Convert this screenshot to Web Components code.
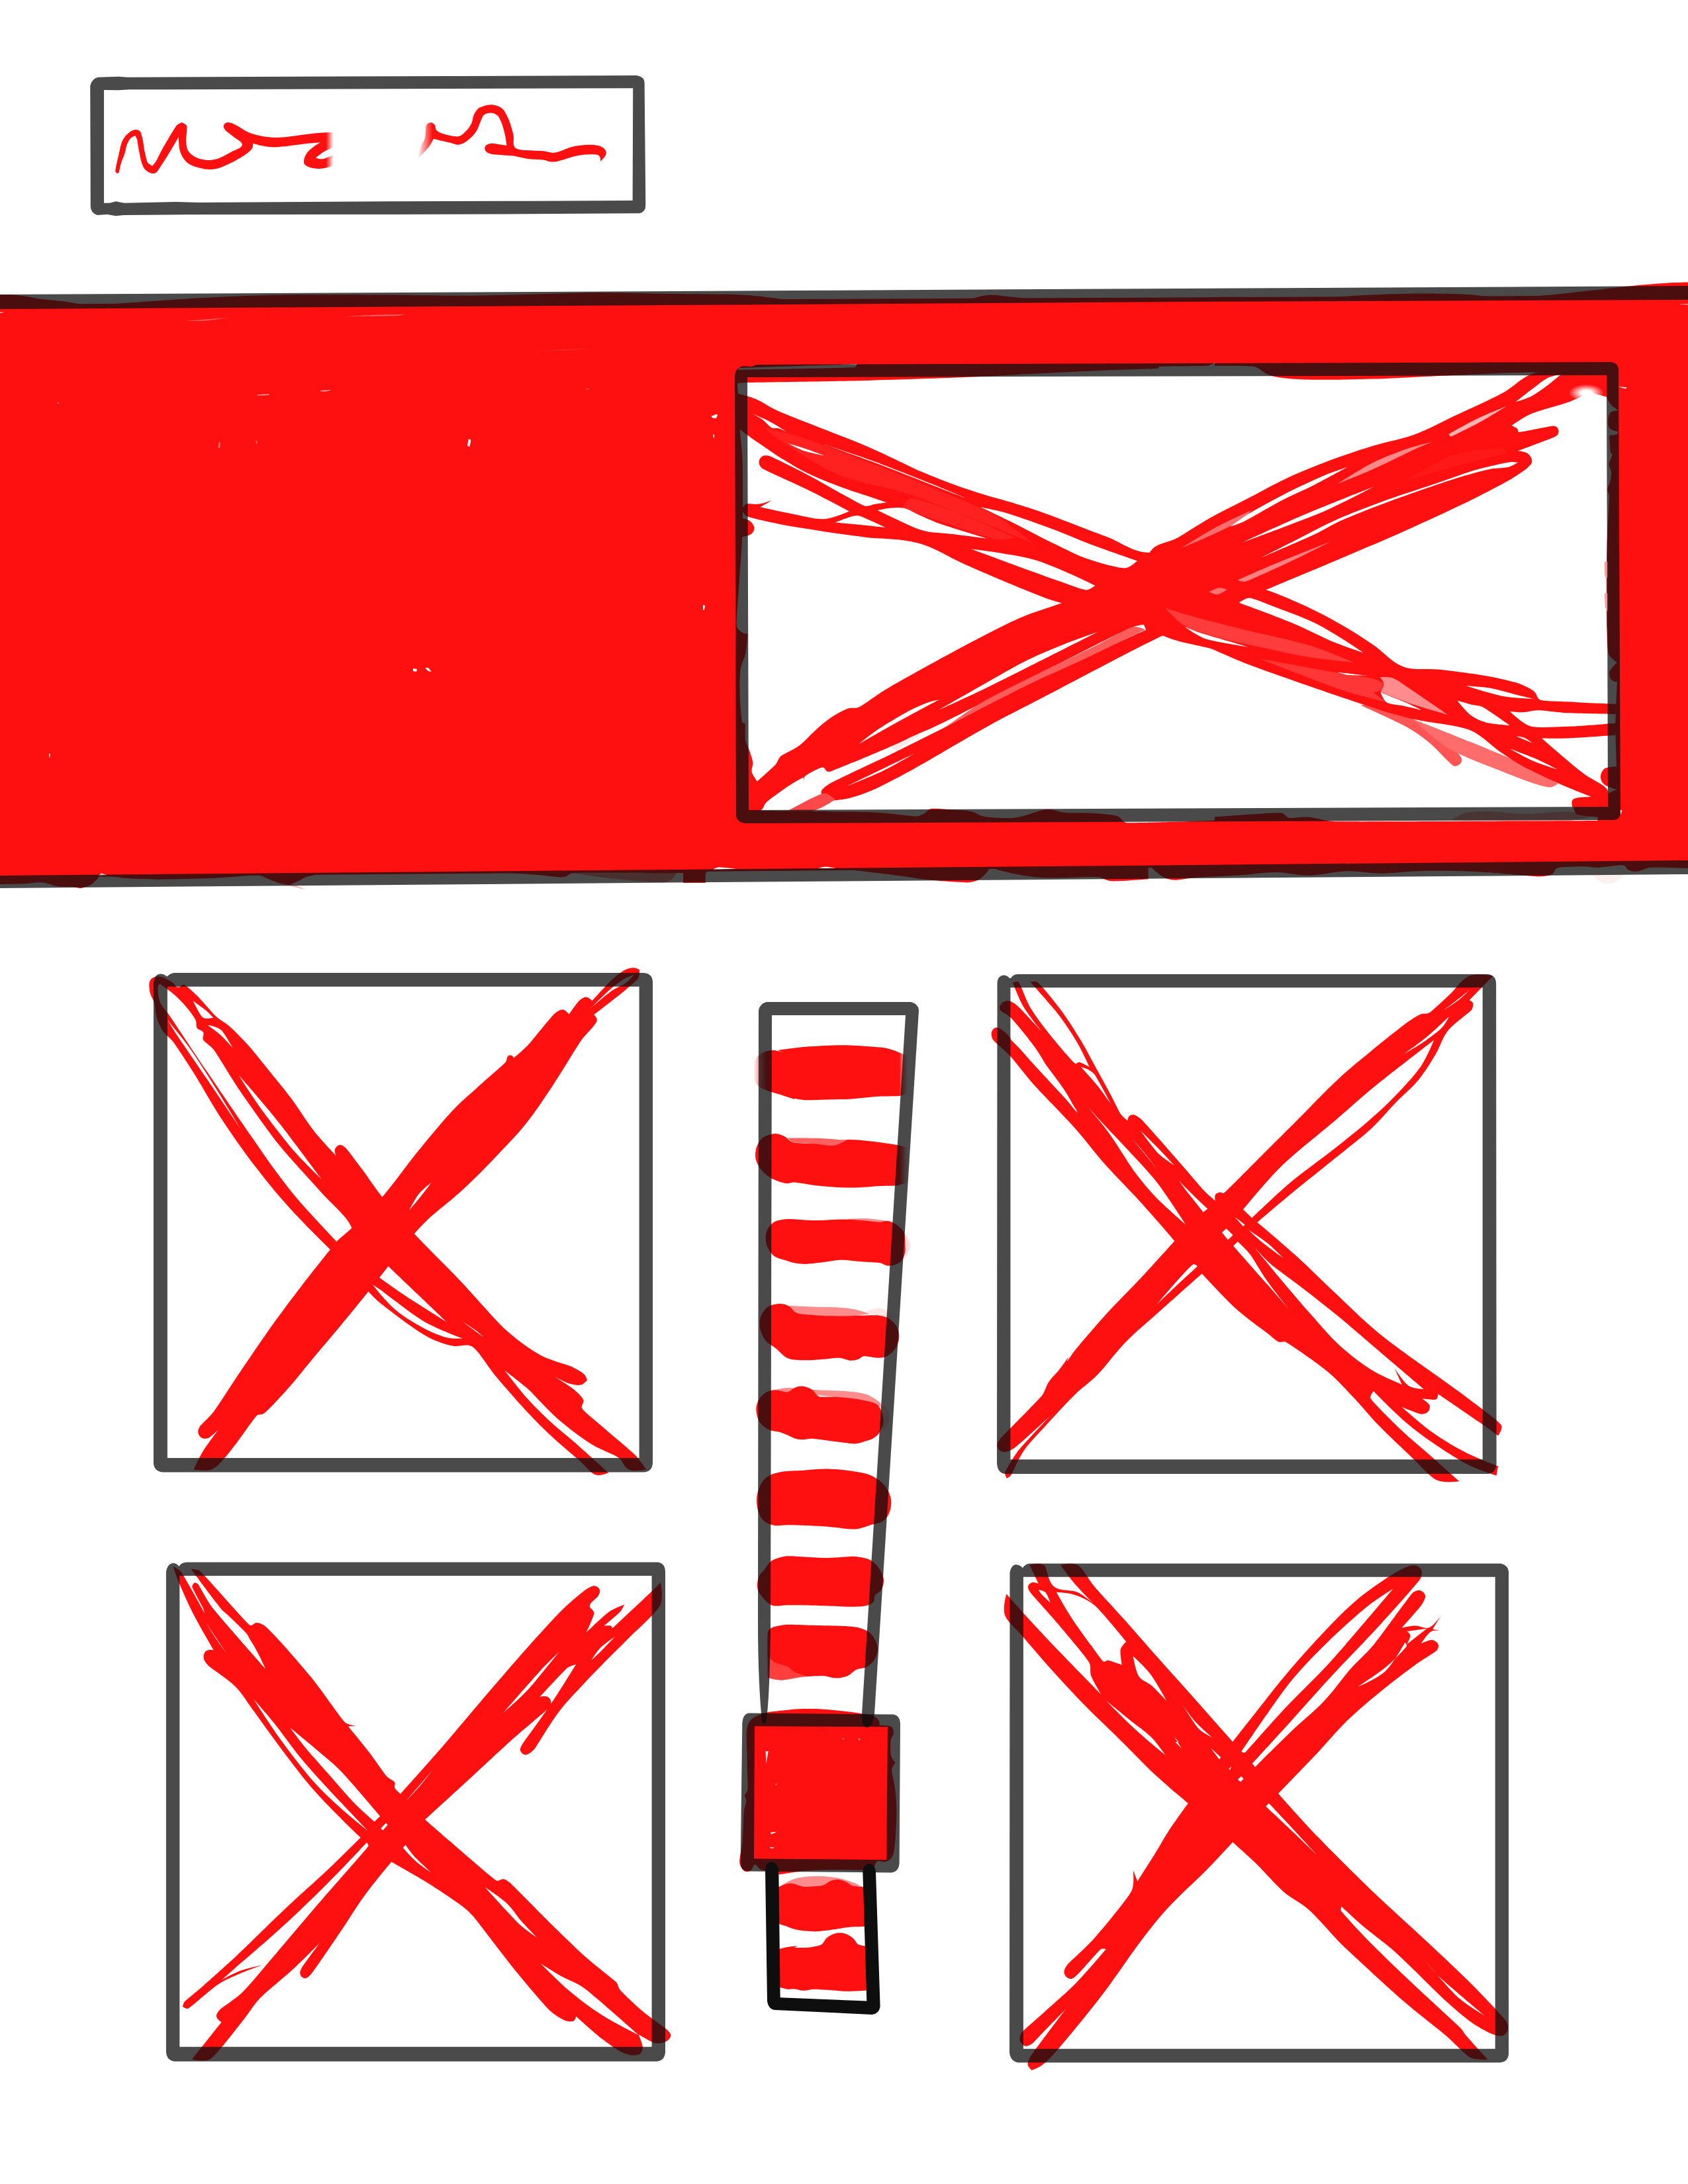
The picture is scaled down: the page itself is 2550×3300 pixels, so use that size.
<!DOCTYPE html>
<html lang="en">
<head>
<meta charset="utf-8">
<title>Wireframe</title>
<style>
body { margin: 0; background: #fff; }
</style>
</head>
<body>
<wire-page>
  <wire-title slot="header"></wire-title>
  <wire-hero slot="hero"></wire-hero>
  <wire-tile slot="left" art="a"></wire-tile>
  <wire-tile slot="left" art="c"></wire-tile>
  <wire-meter slot="middle"></wire-meter>
  <wire-tile slot="right" art="b"></wire-tile>
  <wire-tile slot="right" art="d"></wire-tile>
</wire-page>
<script>
const RED = '#ff1010', INK = 'rgba(14,14,14,.75)', WHITE = '#fff';

// Closed outline through a list of "x,y" points: gentle turns are rounded, sharp corners stay sharp.
function blob(points, fill = RED) {
  const p = points.trim().split(/\s+/).map(s => s.split(',').map(Number));
  const n = p.length;
  const handles = p.map((b, i) => {
    const a = p[(i + n - 1) % n], c = p[(i + 1) % n];
    const u = [b[0] - a[0], b[1] - a[1]], v = [c[0] - b[0], c[1] - b[1]];
    const lu = Math.hypot(...u) || 1, lv = Math.hypot(...v) || 1;
    const cos = (u[0] * v[0] + u[1] * v[1]) / (lu * lv);
    if (cos < 0.25) return [0, 0];
    const t = [u[0] / lu + v[0] / lv, u[1] / lu + v[1] / lv], lt = Math.hypot(...t);
    const len = Math.min(lu, lv) * 0.36;
    return [t[0] / lt * len, t[1] / lt * len];
  });
  let d = `M${p[0]}`;
  for (let i = 0; i < n; i++) {
    const j = (i + 1) % n, b = p[i], c = p[j], h = handles[i], g = handles[j];
    d += `C${(b[0] + h[0]).toFixed(1)} ${(b[1] + h[1]).toFixed(1)} ${(c[0] - g[0]).toFixed(1)} ${(c[1] - g[1]).toFixed(1)} ${c[0]} ${c[1]}`;
  }
  return `<path d="${d}Z" fill="${fill}"/>`;
}
const red = (...l) => l.map(s => blob(s)).join('');
const gap = (...l) => l.map(s => blob(s, WHITE)).join('');
const ink = d => `<path d="${d}" fill="${INK}" fill-rule="evenodd"/>`;

class Sketch extends HTMLElement {
  constructor() { super(); this.attachShadow({ mode: 'open' }); }
  draw(box, ratio, body) {
    this.shadowRoot.innerHTML = `<style>
      :host { display: block; }
      svg { display: block; width: 100%; aspect-ratio: ${ratio}; overflow: visible; }
    </style><svg viewBox="${box}" preserveAspectRatio="none" aria-hidden="true">${body}</svg>`;
  }
}

customElements.define('wire-title', class extends Sketch {
  connectedCallback() {
    this.draw('0 0 1568 750', '880 / 250', `
    <defs>
      <linearGradient id="out" gradientUnits="userSpaceOnUse" x1="664" x2="684" y1="0" y2="0"><stop stop-color="${RED}"/><stop offset="1" stop-color="${RED}" stop-opacity="0"/></linearGradient>
      <linearGradient id="in" gradientUnits="userSpaceOnUse" x1="910" x2="950" y1="0" y2="0"><stop stop-color="${RED}" stop-opacity="0"/><stop offset="1" stop-color="${RED}"/></linearGradient>
    </defs>
    <path fill="#4a4a4a" fill-rule="evenodd" d="M50 80L105 77L130 80L1500 72Q1521 78 1521 105L1524 660Q1524 690 1508 697L1215 700L840 702L280 703L120 705L98 709L75 702L48 705Q30 695 30 665L29 120Q32 88 50 80ZM66 138L105 139L135 136L1490 130L1489 639L1215 641L840 643L320 648L260 645L120 650L98 643L82 650L66 650Z"/>` +
    blob('97,508 98,490 106,430 114,375 125,345 142,322 153,318 163,325 170,360 176,420 184,468 196,482 206,462 225,400 262,298 275,285 288,298 289,325 287,370 293,415 310,440 330,452 352,456 375,448 410,418 438,387 415,350 393,320 388,300 396,286 408,287 430,305 455,330 485,345 520,353 560,350 620,337 660,331 684,330 684,392 658,418 636,446 653,451 668,443 684,432 684,478 665,490 645,495 622,490 606,475 605,450 614,420 630,396 648,376 600,383 550,394 520,397 490,390 467,380 465,402 450,427 420,458 390,482 370,494 348,498 320,490 295,473 280,448 270,410 267,350 250,400 228,460 208,510 200,516 188,512 175,495 167,465 160,410 155,362 150,345 138,356 128,385 122,425 112,470 106,512 101,516', 'url(#out)') +
    blob('911,450 918,400 930,355 933,300 940,287 948,286 957,298 961,320 980,337 1020,348 1040,325 1055,290 1062,250 1075,220 1090,210 1107,205 1125,210 1140,225 1155,270 1168,340 1174,401 1215,412 1250,415 1275,423 1295,415 1325,396 1360,387 1385,387 1405,395 1417,415 1415,438 1402,462 1398,435 1375,430 1340,436 1310,450 1285,462 1268,463 1250,455 1210,451 1165,436 1145,434 1105,427 1092,410 1094,390 1105,381 1125,383 1150,390 1146,345 1137,290 1126,255 1110,242 1090,250 1080,280 1070,320 1055,352 1035,378 1018,386 995,376 953,359 942,392 925,425', 'url(#in)'));
  }
});

customElements.define('wire-hero', class extends Sketch {
  connectedCallback() {
    this.draw('0 400 2550 970', '2550 / 970', `
    <defs><clipPath id="c"><rect x="0" y="400" width="2550" height="970"/></clipPath></defs>
    <g clip-path="url(#c)">
    <path fill="${RED}" d="M0 460L1200 452L2550 446V1304L0 1326Z"/>
    <g transform="translate(0 400) scale(.7653 .3333)">` +
      red('-40,240 -30,137 30,137 80,155 125,166 180,184 240,175 300,165 420,148 520,139 600,136 780,137 930,140 1050,134 1180,127 1300,131 1450,135 1500,143 1568,165 1610,180 1568,240') +
      gap('-20,215 8,215 0,219') +
      blob('365,255 410,247 450,241 405,254', '#ff5858') + blob('680,235 740,228 800,226 785,231', '#ff6c6c') +
      blob('1060,392 1120,383 1170,380 1120,388', '#ff2c2c') +
      blob('508,589 532,585 530,591 508,593', '#ff9090') + blob('632,570 654,567 645,574 633,574', '#ffa0a0') +
      blob('112,624 117,624 115,629', '#ff9090') + blob('1156,562 1163,563 1160,567', '#ff8080') +
      blob('432,805 435,805 434,832 431,830', '#ff7070') + blob('505,798 508,800 506,816', '#ff8080') +
      gap('925,790 929,794 927,824 923,822', '1410,681 1415,678 1414,694 1411,697', '1407,768 1410,772 1409,788') +
    `</g>
    <g fill="#fff"><path d="M1062 914l3 1l-1 7l-2-1zM624 1010l6 1l-1 4l-5-1zM642 1009l5 0l5 6l-5-1zM74 1138l2 2l-1 6zM710 665l1 3l-1 2z"/></g>
    <g transform="translate(0 1250) scale(1.0842 .3333)">` +
      red('-30,200 -30,258 0,258 35,256 58,250 80,268 100,270 112,277 125,263 133,243 141,212 155,222 180,232 220,236 300,230 360,218 372,232 388,252 402,262 415,245 430,222 478,200 500,211 540,209 700,207 750,216 785,226 798,208 930,208 952,207 952,252 983,252 985,200 1000,188 1080,196 1120,194 1150,183 1230,210 1300,240 1350,250 1362,240 1372,215 1380,183 1405,205 1440,225 1470,229 1530,226 1548,244 1600,235 1600,150') +
      blob('398,260 408,258 425,282', 'rgba(255,16,16,.3)') +
      blob('798,208 943,207 935,238 925,250 860,235', 'rgba(255,16,16,.45)') +
      gap('136,222 141,209 150,217', '994,192 1000,182 1025,188', '1140,186 1150,179 1165,185') +
    `</g>
    <g transform="translate(1780 420) scale(.4911 .5869)">` +
      red('-1200,90 -700,75 -640,55 -580,44 -520,48 -380,58 70,58 100,50 200,49 400,53 580,44 750,40 900,43 990,52 1150,43 1400,20 1500,13 1590,11 1590,90',
          '-120,1480 -40,1545 60,1543 200,1537 300,1530 400,1538 520,1527 620,1533 740,1527 900,1528 1050,1537 1110,1541 1150,1535 1165,1519 1250,1515 1290,1518 1370,1512 1385,1524 1410,1528 1450,1518 1590,1520 1590,1480') +
      blob('1270,1535 1370,1535 1350,1553 1310,1558', '#fff0f0') + gap('1540,68 1590,66 1590,70') +
    `</g>
    <g transform="translate(1080 520) scale(.4719)">` +
      gap('1600,60 1568,72 1230,85 1000,96 850,104 500,116 103,123 72,125 74,160 80,190 80,270 88,370 88,600 78,760 70,905 90,925 105,928 98,990 82,1040 80,1130 88,1212 96,1214 98,1270 110,1300 121,1340 115,1370 132,1400 108,1440 108,1494 300,1496 520,1500 645,1512 670,1503 690,1488 750,1490 820,1496 860,1512 960,1516 1060,1490 1120,1500 1210,1502 1290,1512 1315,1532 1600,1525', '76,76 455,64 448,74 76,82', '-12,230 8,225 4,236 -8,236') +
    `</g>
    <g transform="translate(1780 420) scale(.4911 .5869)">` +
      gap('-60,228 232,228 280,250 340,259 420,262 600,260 860,250 1100,243 1318,250 1318,306 1330,325 1354,341 1328,348 1325,385 1352,395 1350,402 1326,405 1330,450 1335,455 1325,480 1332,500 1328,525 1320,545 1326,560 1318,700 1318,900 1325,970 1350,990 1326,1015 1333,1035 1350,1040 1345,1150 1348,1258 1310,1264 1299,1285 1310,1304 1350,1318 1322,1330 1322,1362 1215,1362 1225,1380 1290,1388 1290,1397 470,1399 400,1388 340,1390 320,1378 240,1380 100,1388 -60,1396', '1354,280 1380,282 1376,285', '1358,1370 1364,1370 1362,1382') +
      blob('840,1396 880,1378 960,1373 1060,1380 1200,1374 1280,1385 1200,1398', 'rgba(255,16,16,.35)') +
      blob('1311,730 1322,730 1322,772 1313,770', '#ff9a9a') + blob('1311,812 1322,812 1322,860 1314,850', '#ff9a9a') +
    `</g>
    <g transform="translate(1080 520) scale(.4719)">` +
      red('70,158 105,167 140,180 200,213 350,273 500,333 660,408 740,440 840,475 960,510 1060,543 1250,615 1400,667 1568,573 1640,535 1640,900 1568,865 1500,905 1568,930 1640,948 1640,985 1568,970 1434,933 1340,860 1110,829 1000,790 800,705 650,637 480,618 350,600 200,575 100,550 88,530 100,512 140,512 182,500 145,522 240,542 350,560 430,535 300,468 150,397 141,378 150,360 170,357 200,370 300,420 480,518 515,512 550,507 500,490 410,460 300,415 220,370 100,288 75,265',
          '1110,829 980,875 800,965 600,1075 540,1110 460,1163 425,1167 370,1197 318,1240 270,1285 210,1320 195,1345 135,1400 118,1370 121,1340 108,1300 106,1494 145,1494 165,1467 240,1412 283,1387 285,1407 287,1385 345,1355 362,1369 385,1362 440,1340 570,1285 730,1212 1000,1075 1340,905 1450,880 1500,780 1300,760',
          '1640,800 1600,860 1500,905 1434,933 1300,1000 1100,1105 880,1220 720,1312 600,1380 500,1430 440,1451 390,1460 355,1457 340,1435 350,1420 375,1403 460,1362 560,1315 740,1225 1000,1090 1380,915 1370,890 1450,850',
          '85,558 110,565 126,588 116,608 85,618') +
      blob('740,1225 850,1150 1000,1072 1200,975 1340,905 1378,914 1200,1000 1000,1092', '#ff5c5c') +
      blob('565,1292 620,1262 680,1235 640,1262 580,1300', '#ffe8e8') +
      blob('235,1494 350,1438 385,1458 315,1494', '#ff4848') +
      blob('160,270 250,290 550,400 720,470 900,550 1020,640 950,610 620,480 400,420 240,330', '#ff2020') +
      blob('600,525 625,495 750,530 960,620 900,625 700,560', '#ff2222') +
      blob('1412,872 1430,866 1455,880 1440,885', '#ffb0b0') + blob('1500,905 1520,895 1640,935 1640,955', '#ff5050') +
      gap('118,222 150,240 182,268 205,270 230,281 190,256 155,238', '520,532 560,525 605,525 650,545 720,575 870,622 760,608 680,600 640,588', '385,571 420,558 455,549 500,566 545,587 450,577', '850,522 930,540 1080,592 1200,640 1352,694 1315,717 1200,690 1080,636 950,570', '820,656 920,670 1020,690 1120,728 1217,773 1190,787 1100,758 950,704', '340,318 500,372 700,450 800,492 690,449 500,375', '460,1281 520,1235 620,1175 680,1148 718,1138 640,1180 540,1235', '715,1172 850,1095 1000,1012 1120,960 1225,922 1100,985 850,1110', '425,1414 520,1368 640,1310 540,1365', '235,318 290,335 350,357 280,340') +
    `</g>
    <g transform="translate(1780 420) scale(.4911 .5869)">` +
      blob('560,1100 640,1098 700,1125 780,1165 840,1205 872,1238 868,1250 850,1257 825,1240 770,1195 700,1155', '#ff5454') +
      blob('720,1135 900,1195 1060,1252 1168,1302 1145,1311 1100,1303 980,1265 830,1210', '#ff6c6c') +
      red('-90,710 0,668 100,617 220,565 330,517 450,475 600,432 730,402 850,355 1000,295 1095,245 1320,245 1320,307 1290,300 1265,296 1205,318 1140,335 1080,352 1025,380 1043,388 1047,397 1155,381 1168,388 1168,402 1155,410 1045,445 1075,452 1088,472 1075,488 1025,517 900,572 700,650 500,722 270,803 187,835 0,895 -90,930',
          '-80,780 190,790 270,803 400,848 500,892 600,945 690,1000 800,1008 950,1025 1050,1045 1095,1065 1112,1086 1220,1092 1348,1097 1345,1123 1200,1120 1105,1113 1060,1118 1020,1116 1080,1153 1200,1155 1348,1146 1345,1177 1200,1185 1118,1185 1180,1230 1250,1278 1320,1318 1322,1362 1212,1362 1212,1345 1230,1338 1272,1336 1180,1305 1060,1257 990,1220 900,1165 730,1137 620,1112 400,1050 200,990 60,942 -80,915') +
      blob('1000,440 850,455 700,522 850,485 1010,452', '#ff1818') +
      blob('-40,850 60,875 200,905 400,945 540,990 400,976 250,950 120,925 20,896', '#ff3c3c') +
      blob('250,980 500,1018 600,1032 630,1042 625,1060 600,1067 640,1092 500,1060', '#ff3636') +
      blob('620,1028 660,1030 720,1062 830,1125 730,1100 622,1066 632,1045', '#ff8c8c') +
      blob('10,695 120,640 225,598 200,620 120,655', '#ff6c6c') +
      blob('490,530 600,475 710,438 780,422 730,440 600,492', '#ff8888') +
      blob('832,402 920,362 1010,330 930,370 838,408', '#ffb0b0') +
      blob('182,778 300,735 470,678 350,728 205,782', '#ff8080') + blob('95,808 125,798 150,802 120,815', '#ff7070') +
      gap('160,640 215,608 330,555 450,508 520,487 420,532 320,572 200,628', '250,722 350,680 480,625 620,578 800,527 920,493 1020,474 1045,475 1015,487 960,492 850,517 650,575 500,625 420,660', '200,680 400,605 600,538 450,600', '1038,319 1090,285 1135,258 1178,248 1135,277 1085,305', '187,836 217,824 300,848 420,888 510,932 570,965 480,938 350,888', '858,1088 900,1098 935,1104 1020,1152 945,1144 900,1126', '885,1050 960,1056 1040,1073 1095,1084 1000,1077', '622,1067 700,1093 750,1113 695,1102 640,1092', '20,898 65,913 215,950 80,928', '490,1015 580,1024 520,1022', '1040,1180 1065,1184 1090,1198', '1020,1212 1100,1238 1165,1265 1090,1243') +
      `<ellipse cx="1255" cy="296" rx="54" ry="22" fill="url(#soft)"/><defs><radialGradient id="soft"><stop offset=".3" stop-color="#fff"/><stop offset="1" stop-color="#fff" stop-opacity="0"/></radialGradient></defs>
    </g>` +
      ink('M-5 445L1200 439L1780 436L2555 432V453L1780 456L1200 460L-5 467ZM-5 1323L1700 1308L2555 1300V1321L1700 1328L-5 1342Z') +
      ink('M1123 553L1136 554L1142 551L2433 547Q2445 548 2445 559L2448 1228Q2448 1238 2438 1239L1125 1244Q1112 1242 1112 1231L1110 566Q1112 555 1123 553ZM1129 570L2427 567L2429 1219L1131 1224Z') +
    '</g>');
  }
});

const TILES = {
  a: {
    ratio: '1 / 1',
    frame: 'M62 42Q74 42 83 50Q92 40 105 39H1495Q1520 41 1521 66V1490Q1520 1516 1495 1518H70Q44 1515 43 1490V68Q45 44 62 42ZM84 80V1476H1481V80Z',
    red: ['175,1400 180,1383 220,1340 300,1220 400,1075 480,968 565,860 585,835 630,795 720,703 820,575 880,502 940,435 1000,380 1086,303 1092,286 1103,284 1110,291 1150,255 1230,160 1255,148 1273,162 1305,120 1325,111 1342,122 1400,60 1440,30 1465,24 1482,30 1478,55 1440,90 1347,163 1356,178 1345,198 1310,238 1230,365 1150,480 1060,580 960,680 860,765 815,812 738,908 680,982 600,1080 520,1175 450,1260 400,1315 368,1345 350,1349 290,1430 250,1480 215,1510 162,1510 190,1455 235,1392 205,1417 185,1416',
      '115,82 132,74 170,105 230,170 265,195 320,250 390,335 450,410 520,510 583,580 580,562 595,549 612,558 660,620 720,703 815,812 950,950 1090,1100 1190,1172 1280,1205 1318,1228 1327,1245 1310,1259 1275,1256 1232,1236 1290,1275 1316,1305 1311,1328 1380,1390 1470,1468 1502,1510 1450,1510 1420,1475 1340,1435 1240,1360 1150,1270 1083,1217 1150,1300 1220,1370 1290,1430 1390,1520 1352,1526 1300,1480 1220,1410 1150,1340 1060,1238 985,1145 930,1144 860,1120 770,1060 680,984 630,900 630,795 540,690 450,590 400,530 300,390 220,265 190,237 190,215 172,203 168,180 140,140 100,100 62,72 56,78 62,125 90,165 200,330 330,520 400,620 470,710 585,835 568,860 450,740 350,620 250,480 160,332 100,242 70,210 52,170 46,130 32,95 34,60 60,50 100,68'],
    gap: ['1338,143 1400,92 1440,70 1465,45 1440,55 1395,88', '738,908 712,942 780,990 850,1035 912,1074', '692,963 715,978 760,1012 850,1075 958,1122 915,1120 850,1095 760,1038', '203,194 222,198 245,210 278,262 240,222', '160,122 200,152 220,172 190,172', '295,342 350,405 420,490 540,650 460,568 360,440', '85,180 150,262 230,385 300,500 200,352 110,220', '800,742 830,692 866,660 835,700', '955,1070 1000,1100 1020,1118']
  },
  b: {
    ratio: '1 / 1',
    frame: 'M70 46Q82 46 88 55H92Q98 44 112 43H1505Q1528 46 1529 70L1530 1495Q1528 1520 1505 1523H75Q52 1520 51 1490L52 66Q55 48 70 46ZM91 83V1480H1489V83Z',
    red: ['98,68 115,66 150,142 210,225 283,308 295,304 325,318 290,248 235,165 150,66 170,66 235,142 300,240 345,322 385,395 418,458 438,477 442,464 455,459 475,470 530,530 600,610 665,685 697,714 698,696 712,689 722,692 860,555 960,455 1060,355 1160,270 1270,183 1305,162 1330,158 1390,105 1450,48 1520,48 1450,120 1460,128 1457,148 1385,212 1350,280 1300,355 1235,420 1160,500 1050,590 920,695 822,778 940,880 1050,985 1180,1105 1350,1230 1440,1295 1545,1380 1535,1410 1480,1370 1357,1286 1352,1302 1310,1300 1332,1320 1328,1338 1308,1346 1250,1325 1340,1400 1440,1460 1535,1500 1530,1528 1450,1498 1340,1430 1250,1360 1166,1278 1157,1298 1250,1395 1330,1465 1420,1545 1355,1542 1270,1465 1180,1378 1110,1300 1030,1220 905,1132 885,1132 850,1105 760,1035 658,930 540,1035 430,1135 350,1228 280,1290 200,1375 130,1455 92,1528 80,1536 75,1520 110,1460 210,1350 150,1405 100,1448 70,1458 52,1442 60,1420 185,1290 205,1250 235,1215 262,1178 258,1192 280,1160 370,1055 480,940 577,833 480,722 370,605 280,497 160,370 90,285 38,235 36,212 50,201 75,215 160,310 290,450 220,350 160,255 90,170 60,148 66,128 85,122 110,135 185,215 130,140'],
    gap: ['300,318 320,325 340,340 390,430 350,375', '90,222 92,236 190,335 290,455 250,385 160,270', '310,425 360,480 440,565 525,660 610,785 520,702 460,630 380,510', '450,528 490,575 525,620 480,565', '475,505 520,550 575,608 530,575', '590,655 640,705 675,738 662,748 620,695', '780,740 890,615 1060,470 1170,375 1345,238 1310,310 1245,388 1160,470 1050,560 920,660 806,765', '1255,280 1320,232 1390,168 1370,200 1320,240', '1450,90 1400,130 1370,152 1420,118', '717,808 730,796 750,816 735,830', '751,848 764,835 800,872 850,950 915,1035 850,960', '755,762 785,785 780,790', '795,800 850,838 900,885 840,840', '812,850 860,900 950,968 1060,1055 1160,1140 1315,1272 1270,1262 1228,1210 1250,1258 1160,1215 1065,1142 980,1050 890,945', '525,1020 590,945 633,902 645,908 580,968', '125,1475 150,1455 135,1472']
  },
  c: {
    ratio: '1 / 1',
    frame: 'M62 62Q73 63 79 72Q87 60 103 60H1498Q1518 64 1519 86V1510Q1518 1534 1495 1538H65Q43 1535 41 1510V88Q45 64 62 62ZM81 100V1495H1479V100Z',
    red: ['62,72 85,88 155,210 150,195 118,132 125,120 135,124 175,190 335,375 290,290 210,205 115,80 140,85 290,247 308,239 330,246 370,285 470,400 572,535 605,545 580,546 640,620 695,695 718,712 718,728 735,746 860,605 1000,440 1140,280 1220,195 1285,140 1310,130 1325,142 1320,160 1295,188 1308,210 1285,268 1355,205 1398,185 1385,207 1338,248 1358,248 1362,256 1480,145 1505,120 1505,185 1410,285 1350,345 1210,495 1130,615 1105,630 1090,618 1095,600 1180,480 1255,362 1230,372 1148,458 1170,458 1181,475 1170,495 1060,590 930,710 808,822 880,885 1020,1003 1040,998 1060,1010 1190,1140 1290,1235 1375,1305 1384,1325 1450,1388 1525,1445 1535,1462 1520,1480 1490,1484 1440,1458 1452,1495 1445,1515 1420,1520 1385,1508 1330,1470 1255,1405 1248,1418 1225,1418 1180,1390 1080,1275 950,1108 920,1080 870,1045 800,1000 708,947 630,1045 560,1150 470,1280 452,1292 438,1280 442,1262 495,1188 420,1262 318,1352 270,1415 170,1532 118,1532 205,1422 190,1405 200,1385 265,1335 340,1250 480,1085 640,900 635,890 520,1010 390,1135 245,1262 205,1297 260,1270 325,1253 260,1278 195,1310 105,1382 90,1376 95,1362 150,1315 250,1225 400,1080 520,970 617,875 560,820 470,725 380,610 300,500 245,427 165,365 152,342 160,322 182,320 120,210 75,110'],
    gap: ['158,238 190,285 222,332 190,288', '175,190 230,255 335,375 290,290 280,272 210,205', '300,465 360,535 440,640 520,730 638,855 560,790 480,712 380,585', '408,550 490,618 560,680 675,812 658,828 600,775 520,685 450,605', '677,848 692,832 697,838 683,854', '742,905 750,897 775,930 825,978 780,945', '1040,505 1110,440 1205,325 1150,380', '1300,350 1325,315 1370,280 1330,322', '750,768 790,725 830,675', '985,1022 1050,1070 1095,1125 1140,1172 1090,1135', '1150,1248 1210,1285 1270,1315 1320,1355 1440,1460 1330,1400 1230,1325']
  },
  d: {
    ratio: '800 / 820',
    frame: 'M68 65Q82 67 88 75Q95 63 110 62H1503Q1526 66 1527 88V1480Q1525 1501 1503 1504H75Q52 1500 49 1475L50 88Q54 66 68 65ZM90 101V1464H1487V101Z',
    red: ['108,66 150,66 180,128 250,145 298,178 240,118 200,66 250,66 300,128 390,225 480,325 590,445 710,577 780,490 870,380 980,260 1080,165 1180,95 1225,72 1250,68 1268,80 1266,105 1150,235 1000,390 880,520 768,640 776,650 880,550 980,460 1060,365 1120,305 1190,215 1245,145 1265,140 1280,155 1270,180 1210,248 1250,242 1292,247 1328,210 1302,252 1331,258 1298,258 1268,293 1300,283 1318,295 1315,312 1250,355 1150,430 1050,515 960,610 845,727 960,850 1130,1015 1280,1150 1420,1280 1520,1385 1524,1410 1510,1426 1480,1422 1420,1390 1340,1325 1240,1230 1180,1175 1090,1105 1032,1053 1030,1064 1100,1140 1220,1255 1385,1405 1400,1425 1465,1495 1415,1490 1340,1425 1220,1330 1090,1215 1030,1160 935,1062 860,1010 780,930 710,867 630,950 520,1055 440,1150 330,1300 240,1410 170,1490 140,1515 115,1526 103,1510 112,1485 215,1350 150,1415 115,1450 95,1456 80,1440 85,1418 150,1360 250,1270 335,1176 320,1176 250,1250 228,1262 211,1245 220,1222 300,1145 412,1005 415,948 428,980 480,900 520,835 578,755 480,672 380,575 270,470 170,365 90,275 35,210 40,150 90,205 200,320 320,440 290,385 286,350 200,245 110,145 104,128 115,117 135,120'],
    gap: ['188,145 240,152 300,182 395,288 378,310 382,355 340,342 328,346 290,298 230,215', '135,138 155,145 170,175 145,152', '415,330 465,380 515,460 470,415 432,388', '335,458 400,510 470,565 510,615 420,540', '560,468 600,520 650,565 610,540', '535,560 550,578 540,578 560,598', '645,595 675,622 670,628', '736,605 745,609 860,485 1000,345 1185,135 1110,185 990,290 880,405', '697,657 706,648 702,658', '725,686 735,677 742,684 733,693', '808,764 817,755 870,810 960,905 880,830', '1080,418 1160,375 1220,290 1225,300 1165,360', '1226,258 1285,250 1225,296 1236,270', '1275,1205 1320,1255 1455,1368 1380,1318']
  }
};

customElements.define('wire-tile', class extends Sketch {
  connectedCallback() {
    const t = TILES[this.getAttribute('art')];
    this.draw('0 0 1568 1568', t.ratio, red(...t.red) + gap(...t.gap) + ink(t.frame));
  }
});

customElements.define('wire-meter', class extends Sketch {
  connectedCallback() {
    const pale = s => blob(s, '#ff8c8c');
    this.draw('1095 1490 320 1580', '320 / 1580', `
    <defs><linearGradient id="l" gradientUnits="userSpaceOnUse" x1="115" x2="175" y1="0" y2="0"><stop stop-color="${RED}" stop-opacity="0"/><stop offset="1" stop-color="${RED}"/></linearGradient>
    <linearGradient id="r" gradientUnits="userSpaceOnUse" x1="775" x2="815" y1="0" y2="0"><stop stop-color="${RED}"/><stop offset="1" stop-color="${RED}" stop-opacity="0"/></linearGradient></defs>
    <g transform="translate(1100 1490) scale(.3333 .5102)">` +
      blob('115,240 125,215 155,198 205,190 300,205 300,335 240,322 180,310 135,295 115,270', 'url(#l)') +
      blob('225,190 350,180 520,175 640,179 725,185 780,198 815,212 815,316 780,325 680,327 560,334 450,336 340,337 280,330 240,320 200,290 220,220 290,207', 'url(#r)') +
      blob('123,500 130,475 155,450 210,437 255,445 290,462 400,466 540,455 700,464 775,472 815,484 815,580 770,590 690,592 560,597 420,592 300,581 260,584 190,567 145,540 126,515', 'url(#r)') +
      blob('270,450 420,451 535,457 480,472 390,467 290,462', '#ff6060') +
      pale('540,690 620,688 740,697 720,703 600,697') +
      red('170,750 175,725 205,700 265,690 400,694 540,691 685,699 725,696 770,710 800,735 805,775 790,810 760,824 720,828 690,820 600,816 510,811 430,818 350,823 300,820 255,811 210,800 180,775') +
      blob('800,730 825,765 805,805', '#ffdede') +
      pale('270,946 400,950 480,951 570,957 640,970 500,980 300,970') + blob('620,966 660,956 710,958 750,985', '#ffe4e4') +
      red('143,1000 150,975 180,950 235,941 275,948 310,968 400,975 520,977 680,975 730,985 765,1010 775,1040 760,1070 725,1094 680,1101 613,1096 590,1105 555,1109 505,1101 430,1105 350,1108 270,1102 218,1074 170,1050 148,1022') +
      pale('200,1198 260,1190 400,1196 540,1200 630,1210 690,1235 700,1250 640,1232 500,1218') +
      blob('690,1238 725,1255 728,1290 705,1320', '#ffd8d8') +
      red('127,1255 135,1230 165,1206 210,1196 270,1202 300,1190 335,1185 380,1195 410,1215 500,1217 600,1225 680,1242 704,1285 690,1318 660,1338 620,1348 580,1355 500,1350 380,1340 335,1343 300,1339 270,1330 235,1321 180,1312 140,1288',
          '129,1525 145,1480 180,1452 245,1438 340,1434 450,1430 570,1437 650,1450 710,1480 738,1520 730,1560 700,1585 650,1595 580,1608 430,1600 270,1596 200,1596 150,1575') +
    `</g><g transform="translate(1100 2250) scale(.3333 .523)">` +
      red('132,275 140,252 165,232 195,208 260,194 450,199 580,195 650,207 690,235 705,262 695,290 665,307 660,325 630,336 570,340 430,337 270,335 200,336 155,312 135,292',
          '180,412 200,400 260,392 400,394 530,396 600,402 650,420 677,458 665,490 630,513 580,522 540,540 485,546 440,540 330,543 240,552 180,545') +
      blob('185,485 210,500 270,513 300,528 360,541 240,552 180,545', 'rgba(255,120,120,.45)') +
      red('90,680 150,650 270,638 380,635 500,640 600,648 660,655 685,672 685,682 740,687 750,705 737,725 738,770 758,790 742,810 755,860 763,920 758,1010 745,1060 715,1076 675,1076 655,1098 450,1100 350,1103 230,1114 228,1104 150,1100 120,1085 105,1100 75,1104 52,1080 65,1020 72,930 82,900 73,885 88,870 86,780') +
      gap('170,757 182,757 172,795', '192,992 220,990 195,997', '188,1034 212,1036 195,1038') +
      blob('516,720 527,720 524,724', '#ff9a9a') + blob('590,720 600,722 592,726', '#ffc0c0') + blob('212,851 225,852 215,855', '#ff8a8a') +
      pale('240,1145 300,1126 400,1118 500,1124 580,1140 600,1147 430,1150') +
      red('220,1152 280,1139 340,1148 430,1145 465,1132 498,1128 535,1135 562,1146 640,1150 640,1264 560,1265 500,1270 450,1275 390,1278 310,1273 260,1262 222,1248',
          '225,1335 255,1325 315,1320 300,1325 370,1324 425,1315 445,1298 475,1286 505,1282 540,1287 570,1300 588,1315 640,1322 640,1448 540,1451 450,1447 385,1445 340,1449 300,1444 270,1445 225,1438') +
      ink('M92 647L750 651Q780 655 780 680L776 1080Q774 1106 740 1108L88 1104Q55 1102 56 1080L64 675Q67 650 92 647ZM120 685L117 1068L718 1071L723 687Z') +
      `<path fill="#0e0e0e" d="M168 1100Q170 1078 198 1077Q226 1080 229 1105L236 1469L628 1479L610 1105Q613 1083 640 1082Q666 1085 669 1105L689 1495Q684 1516 652 1518L210 1505Q182 1502 177 1480Z"/>
    </g>` +
      ink('M1158 1514H1376Q1388 1517 1388 1527L1321 2590Q1318 2610 1309 2610Q1301 2609 1302 2590L1368 1534H1166L1164 2470Q1162 2580 1157 2602Q1154 2608 1151 2600Q1145 2540 1145 2450L1146 1527Q1147 1517 1158 1514Z'));
  }
});

customElements.define('wire-page', class extends HTMLElement {
  constructor() {
    super();
    this.attachShadow({ mode: 'open' }).innerHTML = `<style>
      :host { display: flex; flex-direction: column; overflow: hidden; }
      header { padding: 90px 0 60px 4.706%; }
      header slot { display: block; width: 36.214%; }
      main { display: grid; grid-template-columns: 820fr 320fr 820fr; column-gap: 3.11%; align-items: start; padding: 80px 9.804% 150px 8.235%; }
      .column { display: grid; row-gap: 80px; padding-right: 2.439%; }
      .column ::slotted([art=c]), .column ::slotted([art=d]) { margin-left: 2.5%; margin-right: -2.5%; }
      .middle { padding-top: 40px; }
    </style>
    <header><slot name="header"></slot></header>
    <slot name="hero"></slot>
    <main>
      <section class="column"><slot name="left"></slot></section>
      <section class="middle"><slot name="middle"></slot></section>
      <section class="column"><slot name="right"></slot></section>
    </main>`;
  }
});
</script>
</body>
</html>
